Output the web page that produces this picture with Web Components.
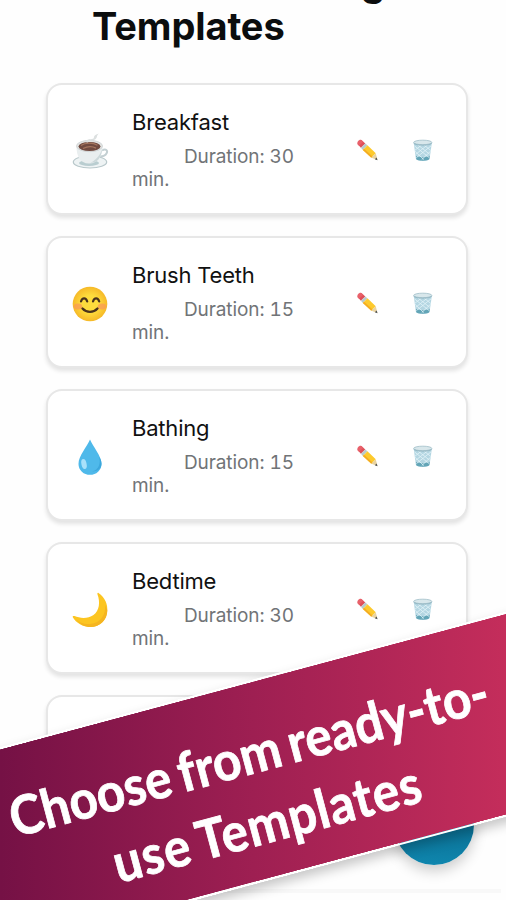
<!DOCTYPE html>
<html lang="en">
<head>
<meta charset="utf-8">
<title>Templates</title>
<style>
    html, body {
        margin: 0;
        height: 900px;
        overflow: hidden;
        background: #fefefe;
    }
</style>
</head>
<body>
<wc-template-screen></wc-template-screen>

<script>
const ICONS = {
    cup: `
        <ellipse cx="18" cy="29" rx="16.7" ry="6" fill="#eef3f4" stroke="#b9c8cb" stroke-width="1.2"/>
        <ellipse cx="17" cy="30" rx="10" ry="3" fill="#b9cdd0"/>
        <path d="M30 17.5c4-2.3 6 .3 4.600 2.800-1.200 2.200-4 3.400-6.600 3.300" fill="none" stroke="#c3cfd2" stroke-width="2"/>
        <path d="M4.500 13.500c0 9 3 17 12.500 17s13.500-8 13.500-17z" fill="#e9eeef"/>
        <path d="M23 29c5-2 7-9 7.400-14-1.500 6-5 11-12 15z" fill="#ccd8da"/>
        <ellipse cx="17.500" cy="13" rx="13" ry="5.700" fill="#e3e4e3" stroke="#cbd1d2" stroke-width=".8"/>
        <ellipse cx="17.500" cy="13.500" rx="11" ry="4.500" fill="#704a40"/>
        <path d="M9 12.500c4-3 12-3 16.500-.3M11 15.500c4-2 9-2.500 13-.4" fill="none" stroke="#a5765f" stroke-width="1.200"/>
        <path d="M13 9c3-5 9-1 9-5 0-1.500 2-2.500 5-3.500-3 2-1 4-4 6s-6 0-7 3z" fill="#dce0e0"/>`,
    smile: `
        <defs><radialGradient id="face"><stop offset=".5" stop-color="#fedc3d"/><stop offset="1" stop-color="#f6b928"/></radialGradient></defs>
        <circle cx="18" cy="18" r="17.300" fill="url(#face)"/>
        <ellipse cx="6" cy="20.500" rx="4.300" ry="3" fill="#f99b57" opacity=".75"/>
        <ellipse cx="30" cy="20.500" rx="4.300" ry="3" fill="#f99b57" opacity=".75"/>
        <path d="M9 15.500c1.200-4.300 5-4.300 6.200 0M21 15.500c1.200-4.300 5-4.300 6.200 0" fill="none" stroke="#49321c" stroke-width="2.200" stroke-linecap="round"/>
        <path d="M10.500 22.500c4 4.500 11 4.500 15 0" fill="none" stroke="#49321c" stroke-width="2.300" stroke-linecap="round"/>`,
    drop: `
        <path d="M18 .5C15 8 6.500 16.500 6.500 25a11.500 10.800 0 0 0 23 0C29.500 16.500 21 8 18 .5z" fill="#4fb9ea"/>
        <path d="M27 18c2 6 0 13-7 14.500 7 0 9.500-4 9.500-8 0-2-1-5-2.500-6.500z" fill="#3ca7dc"/>
        <ellipse cx="12" cy="25" rx="2.600" ry="5" fill="#a9e1fa" transform="rotate(-12 12 25)"/>`,
    moon: `
        <path d="M26.500 1c6.500 4.500 9.500 11.500 8.700 18.500C34.200 29 27 35 18.500 35 11 35 4 31 .8 25.300c-.5-1.300.7-1.600 1.700-1.200C8 26.500 16 27 21.500 23c6-4.500 6.800-13 4-20.500-.4-1.100.2-2 1-1.500z" fill="#fcc521"/>
        <path d="M33 13c1 9-4 18-15 19-6 .5-11-2-14-4.500C8 32.500 13 35 18.500 35 28 35 35.500 28 35.300 18z" fill="#f5b520"/>`,
    pencil: `
        <path d="M1.500 5 5.500 1l4 3.500-4.500 4.500z" fill="#df5058"/>
        <path d="M1.500 5c-.8-2 2-5 4-4l2 1.800-4.500 4.200z" fill="#e8606a"/>
        <path d="M5 9l4.500-4.500 2.200 2L7 11.200z" fill="#b9c9cb"/>
        <path d="M7 11.200l4.700-4.700 8.500 8-4.500 4.800z" fill="#fdca2d"/>
        <path d="M7 11.200 8.300 10l8.700 8-1.300 1.300z" fill="#f4ac22"/>
        <path d="M15.700 19.300 20.200 14.500 22 21.500z" fill="#e9d3a0"/>
        <path d="M22 21.700l-2.800-.9 1.900-2z" fill="#4b5054"/>`,
    bin: `
        <path d="M1.700 3.500 4 20.500c.2 1.200 3 1.800 7 1.800s6.800-.6 7-1.800l2.300-17z" fill="#b4d6e2"/>
        <path d="M4 17.500l.4 3c.4 1 3 1.800 6.600 1.800s6.300-.8 6.600-1.800l.5-3c-4 1.500-10 1.500-14.100 0z" fill="#63a5b7"/>
        <path d="M2.500 7l15 12M2 11.500l0-.5M6 6l12 9.500M12 6l7 5.500M3 12.500l9 8.500M19.500 7l-15 12M16 6 4 15.500M10 6l-7 5.500M19 12.500l-9 8.500" stroke="#e3f4f8" stroke-width=".8" fill="none"/>
        <ellipse cx="11" cy="3.500" rx="9.300" ry="2.300" fill="#d8e7eb" stroke="#9dbcc6" stroke-width=".8"/>
        <path d="M1.700 4.500c3 2.500 15.600 2.500 18.600 0" fill="none" stroke="#8fb4c0" stroke-width=".8"/>`
};

class EmojiIcon extends HTMLElement {
    constructor() {
        super();
        this.attachShadow({ mode: 'open' });
    }

    connectedCallback() {
        const name = this.getAttribute('name');
        const box = name === 'pencil' || name === 'bin' ? 22.5 : 36;
        this.shadowRoot.innerHTML = `
            <style>
                :host { display: block; flex: none; }
                svg { display: block; width: 100%; height: 100%; overflow: visible; }
            </style>
            <svg viewBox="0 0 ${box} ${box}">${ICONS[name]}</svg>
        `;
    }
}

class TemplateCard extends HTMLElement {
    constructor() {
        super();
        this.attachShadow({ mode: 'open' });
    }

    connectedCallback() {
        this.shadowRoot.innerHTML = `
            <style>
                :host {
                    display: flex;
                    align-items: center;
                    box-sizing: border-box;
                    height: 132px;
                    padding: 0 32px 0 24px;
                    border: 2px solid #e7e7e7;
                    border-radius: 16px;
                    background: #fff;
                    box-shadow: 0 3px 4px rgba(0, 0, 0, 0.11);
                }

                .picture { width: 36px; height: 36px; margin-top: 3px; }

                .info {
                    width: 170px;
                    margin-left: 24px;
                }

                .name {
                    color: #111;
                    font-size: 22px;
                    line-height: 30px;
                    letter-spacing: -0.2px;
                }

                .duration {
                    margin-top: 9px;
                    color: #717477;
                    font-size: 19px;
                    font-variant-numeric: tabular-nums;
                    line-height: 22.500px;
                    letter-spacing: -0.1px;
                    text-indent: 52px;
                }

                .actions {
                    display: flex;
                    gap: 34px;
                    margin-left: auto;
                    padding-top: 2px;
                }

                .actions wc-emoji-icon { width: 22px; height: 22px; }
            </style>
            <wc-emoji-icon class="picture" name="${this.getAttribute('icon')}"></wc-emoji-icon>
            <div class="info">
                <div class="name"><slot></slot></div>
                <div class="duration">Duration: ${this.getAttribute('minutes')} min.</div>
            </div>
            <div class="actions">
                <wc-emoji-icon name="pencil"></wc-emoji-icon>
                <wc-emoji-icon name="bin"></wc-emoji-icon>
            </div>
        `;
        if (!this.hasAttribute('icon')) {
            this.shadowRoot.querySelectorAll('wc-emoji-icon, .info').forEach(el => el.remove());
        }
    }
}

class PromoBanner extends HTMLElement {
    constructor() {
        super();
        this.attachShadow({ mode: 'open' });
        this.shadowRoot.innerHTML = `
            <style>
                :host {
                    display: flex;
                    justify-content: center;
                    box-sizing: border-box;
                    width: 640px;
                    height: 198px;
                    border: 2px solid #fff;
                    background: linear-gradient(105deg, #751145 12%, #9e1f52 50%, #c42d5b 88%) padding-box;
                    box-shadow: 0 6px 12px rgba(0, 0, 0, 0.22);
                    transform: rotate(-15deg);
                }

                .text {
                    flex: none;
                    padding-top: 33px;
                    color: #fff;
                    font: 700 54px/71px Lato, sans-serif;
                    text-align: center;
                    white-space: nowrap;
                    word-spacing: -4px;
                    -webkit-text-stroke: 0.8px #fff;
                    transform: translateX(3px) scaleX(0.915);
                }

                ::slotted(span) { display: block; }
                ::slotted(span:last-child) { letter-spacing: 1px; }
            </style>
            <div class="text"><slot></slot></div>
        `;
    }
}

class TemplateScreen extends HTMLElement {
    constructor() {
        super();
        this.attachShadow({ mode: 'open' });
        this.shadowRoot.innerHTML = `
            <style>
                :host {
                    display: flow-root;
                    position: relative;
                    width: 506px;
                    height: 900px;
                    overflow: hidden;
                    font-family: Inter, sans-serif;
                }

                h1 {
                    width: 293px;
                    height: 123px;
                    margin: -40px 0 0 92px;
                    color: #0b0d0e;
                    font-size: 38px;
                    font-weight: 700;
                    line-height: 44px;
                    letter-spacing: -0.1px;
                }

                h1 span { display: block; }
                h1 .top { text-align: right; }

                .list {
                    display: flex;
                    flex-direction: column;
                    gap: 21px;
                    margin: 0 38px 0 46px;
                }

                .add {
                    position: absolute;
                    left: 394px;
                    top: 785px;
                    width: 80px;
                    height: 80px;
                    border-radius: 50%;
                    background: linear-gradient(#0b6f93 50%, #0f86ae);
                    box-shadow: 0 6px 14px rgba(0, 0, 0, 0.2);
                }

                .rule {
                    position: absolute;
                    left: 0;
                    top: 889px;
                    width: 501px;
                    height: 4px;
                    background: #f8f8f8;
                }

                wc-promo-banner {
                    position: absolute;
                    left: -67px;
                    top: 683px;
                }
            </style>
            <h1><span class="top">g</span><span>Templates</span></h1>
            <div class="list">
                <wc-template-card icon="cup" minutes="30">Breakfast</wc-template-card>
                <wc-template-card icon="smile" minutes="15">Brush Teeth</wc-template-card>
                <wc-template-card icon="drop" minutes="15">Bathing</wc-template-card>
                <wc-template-card icon="moon" minutes="30">Bedtime</wc-template-card>
                <wc-template-card></wc-template-card>
            </div>
            <div class="rule"></div>
            <div class="add"></div>
            <wc-promo-banner><span>Choose from ready-to-</span><span>use Templates</span></wc-promo-banner>
        `;
    }
}

customElements.define('wc-emoji-icon', EmojiIcon);
customElements.define('wc-template-card', TemplateCard);
customElements.define('wc-promo-banner', PromoBanner);
customElements.define('wc-template-screen', TemplateScreen);
</script>
</body>
</html>
